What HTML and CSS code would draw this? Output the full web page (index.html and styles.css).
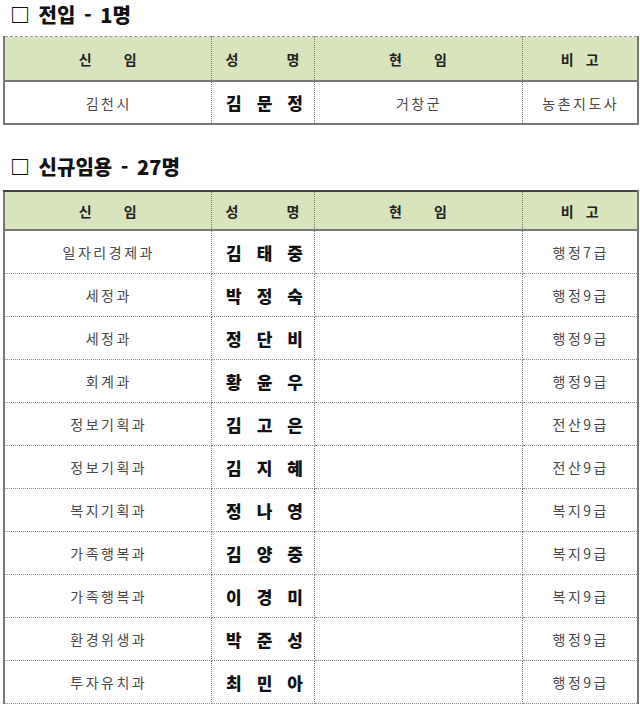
FILE: index.html
```html
<!DOCTYPE html>
<html lang="ko">
<head>
<meta charset="utf-8">
<link rel="stylesheet" href="styles.css">
</head>
<body>
<h2 class="title">□ 전입 - 1명</h2>
<table class="tbl t1">
  <colgroup><col class="c1"><col class="c2"><col class="c3"><col class="c4"></colgroup>
  <thead>
    <tr>
      <th><span class="sp w1"><i>신</i><i>임</i></span></th>
      <th><span class="sp w2"><i>성</i><i>명</i></span></th>
      <th><span class="sp w1"><i>현</i><i>임</i></span></th>
      <th><span class="sp w4"><i>비</i><i>고</i></span></th>
    </tr>
  </thead>
  <tbody>
    <tr><td>김천시</td><td class="nm"><span class="sp"><i>김</i><i>문</i><i>정</i></span></td><td>거창군</td><td>농촌지도사</td></tr>
  </tbody>
</table>

<h2 class="title t2h">□ 신규임용 - 27명</h2>
<table class="tbl t2">
  <colgroup><col class="c1"><col class="c2"><col class="c3"><col class="c4"></colgroup>
  <thead>
    <tr>
      <th><span class="sp w1"><i>신</i><i>임</i></span></th>
      <th><span class="sp w2"><i>성</i><i>명</i></span></th>
      <th><span class="sp w1"><i>현</i><i>임</i></span></th>
      <th><span class="sp w4"><i>비</i><i>고</i></span></th>
    </tr>
  </thead>
  <tbody>
    <tr><td>일자리경제과</td><td class="nm"><span class="sp"><i>김</i><i>태</i><i>중</i></span></td><td></td><td>행정7급</td></tr>
    <tr><td>세정과</td><td class="nm"><span class="sp"><i>박</i><i>정</i><i>숙</i></span></td><td></td><td>행정9급</td></tr>
    <tr><td>세정과</td><td class="nm"><span class="sp"><i>정</i><i>단</i><i>비</i></span></td><td></td><td>행정9급</td></tr>
    <tr><td>회계과</td><td class="nm"><span class="sp"><i>황</i><i>윤</i><i>우</i></span></td><td></td><td>행정9급</td></tr>
    <tr><td>정보기획과</td><td class="nm"><span class="sp"><i>김</i><i>고</i><i>은</i></span></td><td></td><td>전산9급</td></tr>
    <tr><td>정보기획과</td><td class="nm"><span class="sp"><i>김</i><i>지</i><i>혜</i></span></td><td></td><td>전산9급</td></tr>
    <tr><td>복지기획과</td><td class="nm"><span class="sp"><i>정</i><i>나</i><i>영</i></span></td><td></td><td>복지9급</td></tr>
    <tr><td>가족행복과</td><td class="nm"><span class="sp"><i>김</i><i>양</i><i>중</i></span></td><td></td><td>복지9급</td></tr>
    <tr><td>가족행복과</td><td class="nm"><span class="sp"><i>이</i><i>경</i><i>미</i></span></td><td></td><td>복지9급</td></tr>
    <tr><td>환경위생과</td><td class="nm"><span class="sp"><i>박</i><i>준</i><i>성</i></span></td><td></td><td>행정9급</td></tr>
    <tr><td>투자유치과</td><td class="nm"><span class="sp"><i>최</i><i>민</i><i>아</i></span></td><td></td><td>행정9급</td></tr>
  </tbody>
</table>
</body>
</html>
```

FILE: styles.css
```css
html, body {
  margin: 0;
  padding: 0;
  background: #ffffff;
}
body {
  font-family: "Noto Sans CJK KR", "Noto Sans", sans-serif;
  color: #333;
  padding: 0 0 0 3px;
}
.title {
  margin: 0;
  padding: 2px 0 0 7px;
  height: 36px;
  box-sizing: border-box;
  font-size: 20px;
  line-height: 26px;
  font-weight: 900;
  color: #111;
  word-spacing: 3px;
}
.t2h {
  height: 65px;
  padding-top: 29px;
}
.tbl {
  border-collapse: collapse;
  table-layout: fixed;
  width: 634px;
  font-size: 13px;
}
.c1 { width: 207px; }
.c2 { width: 103px; }
.c3 { width: 208px; }
.c4 { width: 116px; }
.tbl th, .tbl td {
  height: 42px;
  padding: 0;
  text-align: center;
  vertical-align: middle;
  border-left: 1px dotted #777;
  border-right: 1px dotted #777;
  border-bottom: 1px dotted #888;
}
.tbl th:first-child, .tbl td:first-child { border-left: 2px solid #777; }
.tbl th:last-child, .tbl td:last-child { border-right: 2px solid #777; }
.tbl th {
  background: #d8e4bc;
  font-weight: 700;
  font-size: 14px;
  color: #222;
  border-bottom: 2px solid #777;
}
.t1 th { border-top: 1px dashed #999; height: 43px; }
.t1 td { height: 41px; }
.t1 tbody tr:last-child td { border-bottom: 2px solid #777; }
.t2 th { border-top: 2px solid #444; height: 37px; }
.tbl td {
  color: #4a4a4a;
  font-weight: 400;
  font-size: 14px;
  letter-spacing: 2.5px;
  text-indent: 2px;
}
.sp {
  display: inline-flex;
  gap: 14px;
}
.sp i { font-style: normal; }
.w1 { gap: 32px; }
.w2 { gap: 48px; }
.w4 { gap: 12px; }
.nm .sp {
  font-size: 17px;
  font-weight: 900;
  color: #111;
  gap: 13px;
  letter-spacing: 0;
}
```
